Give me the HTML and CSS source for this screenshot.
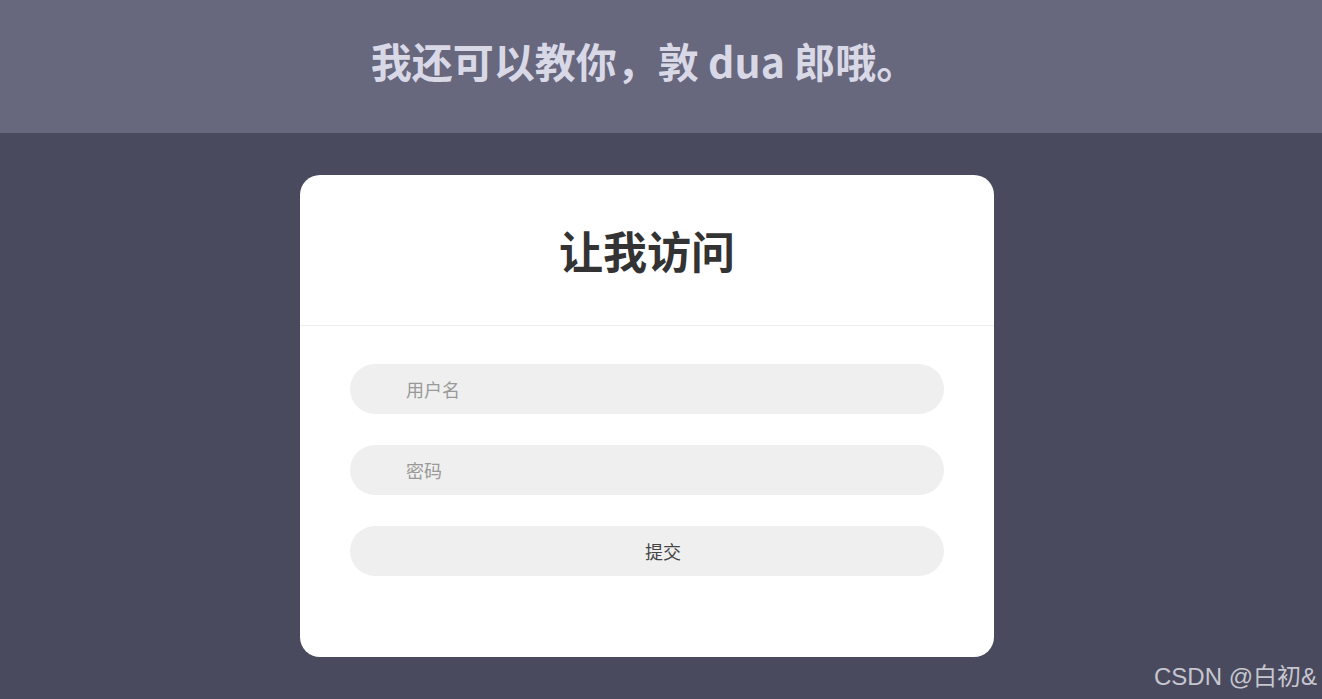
FILE: index.html
```html
<!DOCTYPE html>
<html lang="zh">
<head>
<meta charset="utf-8">
<title>让我访问</title>
<link rel="stylesheet" href="styles.css">
</head>
<body>
<header class="top">
  <h1 class="slogan">我还可以教你，敦 dua 郎哦。</h1>
</header>
<main class="page">
  <section class="card">
    <div class="card-head">
      <h2 class="card-title">让我访问</h2>
    </div>
    <form class="card-body">
      <input class="field" type="text" placeholder="用户名">
      <input class="field" type="password" placeholder="密码">
      <button class="submit" type="button">提交</button>
    </form>
  </section>
</main>
<div class="watermark">CSDN @白初&amp;</div>
</body>
</html>
```
FILE: styles.css
```css
* { box-sizing: border-box; }
html, body { height: 100%; }
body {
  margin: 0;
  background: #4a4a5f;
  font-family: "Noto Sans CJK SC", "Noto Sans", sans-serif;
  overflow: hidden;
}
.top {
  height: 133px;
  background: #67677d;
  display: flex;
  align-items: center;
  justify-content: center;
  padding: 0 34px 12px 0;
}
.slogan {
  margin: 0;
  font-size: 41px;
  font-weight: 700;
  color: #d8d8e6;
  line-height: 1;
  letter-spacing: 0;
}
.page {
  display: flex;
  justify-content: center;
  padding: 42px 28px 0 0;
}
.card {
  width: 694px;
  height: 482px;
  background: #fff;
  border-radius: 20px;
}
.card-head {
  height: 151px;
  border-bottom: 1px solid #eeeeee;
  display: flex;
  align-items: center;
  justify-content: center;
}
.card-title {
  margin: 0;
  font-size: 44px;
  font-weight: 700;
  color: #333;
  line-height: 1;
}
.card-body {
  padding: 38px 50px 0;
  display: flex;
  flex-direction: column;
  gap: 31px;
}
.field, .submit {
  width: 100%;
  height: 50px;
  border: none;
  outline: none;
  border-radius: 25px;
  background: #efefef;
  font-family: "Noto Sans CJK SC", sans-serif;
  font-size: 18px;
}
.field {
  padding: 0 0 0 56px;
  color: #333;
}
.field::placeholder { color: #999; }
.submit {
  padding: 0 0 0 32px;
  color: #444;
  cursor: pointer;
}
.watermark {
  position: absolute;
  right: 5px;
  bottom: 10px;
  font-family: "Liberation Sans", "Noto Sans CJK SC", sans-serif;
  font-size: 24px;
  color: #c6c6ce;
  line-height: 1;
}
```
